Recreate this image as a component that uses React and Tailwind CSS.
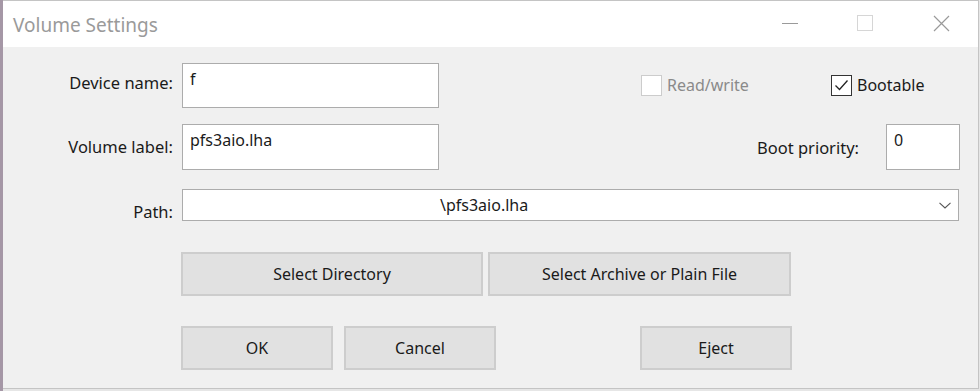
function Checkbox({ checked, disabled, label }) {
  return (
    <div className="flex items-center gap-[5px]">
      <span
        className={
          checked
            ? 'w-[21px] h-[21px] bg-white border border-[#333333] flex items-center justify-center'
            : 'w-[21px] h-[21px] bg-white border border-[#cccccc]'
        }
      >
        {checked && (
          <svg width="15" height="12" viewBox="0 0 15 12">
            <path d="M1.5 6.5 L5.5 10.5 L13.5 1.5" fill="none" stroke="#222" strokeWidth="1.3" />
          </svg>
        )}
      </span>
      <span className={disabled ? 'text-[#8a8a8a]' : 'text-[#1a1a1a]'}>{label}</span>
    </div>
  );
}

function Button({ children, width }) {
  return (
    <button
      type="button"
      className={`${width} h-[44px] bg-[#e1e1e1] border-2 border-[#cdcdcd] text-[#1a1a1a] text-[16px] flex items-center justify-center`}
    >
      {children}
    </button>
  );
}

export default function App() {
  return (
    <div className="w-[980px] h-[391px] bg-[#e6e6e6] flex overflow-hidden text-[16px] font-['Noto_Sans',sans-serif]">
      <div className="w-[3px] h-full bg-[#a597a6]" />
      <div className="w-[976px] h-[389px] flex flex-col border-t border-r border-b border-[#c4c4c4]">
        <div className="h-[46px] bg-white flex items-center">
          <span className="pl-[10px] text-[19px] text-[#9a9a9a] leading-none mt-[3px]">Volume Settings</span>
          <div className="ml-auto flex items-center h-full">
            <span className="w-[16px] h-px bg-[#9a9a9a] mr-[59px] -mt-[1px]" />
            <span className="w-[16px] h-[16px] border border-[#d6d6d6] mr-[60px] -mt-[2px]" />
            <svg width="17" height="17" viewBox="0 0 17 17" className="mr-[28px] -mt-[2px]">
              <path d="M1 1 L16 16 M16 1 L1 16" stroke="#9a9a9a" strokeWidth="1.2" />
            </svg>
          </div>
        </div>

        <div className="flex-1 bg-[#f0f0f0] pr-[18px] flex flex-col">
          <div className="flex items-center mt-[16px] h-[45px]">
            <span className="w-[170px] text-right text-[#1a1a1a] text-[16.5px] -mt-[5px]">Device name:</span>
            <div className="ml-[9px] w-[257px] h-[45px] bg-white border border-[#acacac] px-[7px] pt-[3px] text-[#1a1a1a]">
              f
            </div>
            <div className="ml-[202px] w-[190px] -mt-[1px]">
              <Checkbox disabled label="Read/write" />
            </div>
            <div className="-mt-[1px]">
              <Checkbox checked label="Bootable" />
            </div>
          </div>

          <div className="flex items-center mt-[16px] h-[46px]">
            <span className="w-[170px] text-right text-[#1a1a1a] text-[16.5px]">Volume label:</span>
            <div className="ml-[9px] w-[257px] h-[46px] bg-white border border-[#acacac] px-[7px] pt-[3px] text-[#1a1a1a]">
              pfs3aio.lha
            </div>
            <span className="ml-auto mr-[27px] mt-[2px] text-[#1a1a1a] text-[16.5px]">Boot priority:</span>
            <div className="w-[74px] h-[46px] bg-white border border-[#acacac] px-[7px] pt-[3px] text-[#1a1a1a]">
              0
            </div>
          </div>

          <div className="flex items-center mt-[19px] h-[32px]">
            <span className="w-[170px] text-right text-[#1a1a1a] text-[16.5px] mt-[14px]">Path:</span>
            <div className="ml-[9px] w-[777px] h-[32px] bg-white border border-[#acacac] flex items-center text-[#1a1a1a]">
              <span className="pl-[257px]">\pfs3aio.lha</span>
              <svg width="12" height="7" viewBox="0 0 12 7" className="ml-auto mr-[7px]">
                <path d="M0.5 0.8 L6 6 L11.5 0.8" fill="none" stroke="#555" strokeWidth="1.1" />
              </svg>
            </div>
          </div>

          <div className="flex mt-[31px] ml-[178px] gap-[5px]">
            <Button width="w-[302px]">Select Directory</Button>
            <Button width="w-[303px]">Select Archive or Plain File</Button>
          </div>

          <div className="flex mt-[30px] ml-[178px]">
            <Button width="w-[152px]">OK</Button>
            <div className="ml-[11px]">
              <Button width="w-[152px]">Cancel</Button>
            </div>
            <div className="ml-[144px]">
              <Button width="w-[152px]">Eject</Button>
            </div>
          </div>
        </div>
      </div>
    </div>
  );
}
